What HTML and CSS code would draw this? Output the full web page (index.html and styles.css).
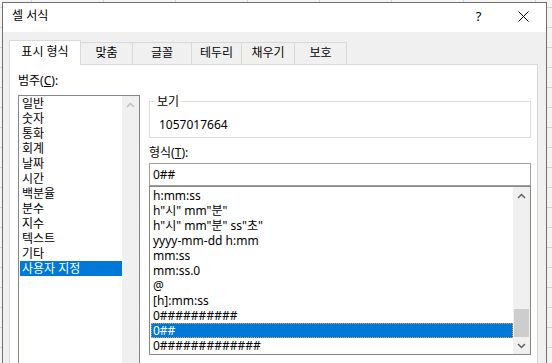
FILE: index.html
```html
<!DOCTYPE html>
<html lang="ko">
  <head>
    <meta charset="UTF-8" />
    <meta name="viewport" content="width=device-width, initial-scale=1.0" />
    <title>셀 서식</title>
    <link rel="stylesheet" href="styles.css">
  </head>
  <body>
    <div class="dialog">
      <div class="titlebar">
        <span class="title">셀 서식</span>
        <span class="title-btn help">?</span>
        <span class="title-btn close">
          <svg width="11" height="11" viewBox="0 0 11 11">
            <path d="M0.5 0.5 L10.5 10.5 M10.5 0.5 L0.5 10.5" stroke="#000" stroke-width="1" fill="none" />
          </svg>
        </span>
      </div>

      <div class="dialog-body">
        <div class="tabs">
          <div class="tab active" style="width: 72px">표시 형식</div>
          <div class="tab" style="width: 53px">맞춤</div>
          <div class="tab" style="width: 60px">글꼴</div>
          <div class="tab" style="width: 51px">테두리</div>
          <div class="tab" style="width: 54px">채우기</div>
          <div class="tab" style="width: 53px">보호</div>
        </div>

        <div class="panel">
          <div class="category">
            <div class="label">범주(<u>C</u>):</div>
            <div class="listbox cat-list">
              <ul>
                <li>일반</li>
                <li>숫자</li>
                <li>통화</li>
                <li>회계</li>
                <li>날짜</li>
                <li>시간</li>
                <li>백분율</li>
                <li>분수</li>
                <li>지수</li>
                <li>텍스트</li>
                <li>기타</li>
                <li class="selected">사용자 지정</li>
              </ul>
              <div class="vscroll">
                <div class="arrow disabled">
                  <svg width="9" height="6" viewBox="0 0 9 6"><polyline points="1,5 4.5,1.5 8,5" /></svg>
                </div>
              </div>
            </div>
          </div>

          <div class="format">
            <fieldset class="sample">
              <legend>보기</legend>
              <div class="sample-value">1057017664</div>
            </fieldset>

            <div class="label format-label">형식(<u>T</u>):</div>
            <div class="textbox">0##</div>

            <div class="listbox fmt-list">
              <ul>
                <li>h:mm:ss</li>
                <li>h"시" mm"분"</li>
                <li>h"시" mm"분" ss"초"</li>
                <li>yyyy-mm-dd h:mm</li>
                <li>mm:ss</li>
                <li>mm:ss.0</li>
                <li>@</li>
                <li>[h]:mm:ss</li>
                <li>0##########</li>
                <li class="selected focused">0##</li>
                <li>0#############</li>
              </ul>
              <div class="vscroll">
                <div class="arrow">
                  <svg width="9" height="6" viewBox="0 0 9 6"><polyline points="1,5 4.5,1.5 8,5" /></svg>
                </div>
                <div class="track"><div class="thumb"></div></div>
                <div class="arrow">
                  <svg width="9" height="6" viewBox="0 0 9 6"><polyline points="1,1 4.5,4.5 8,1" /></svg>
                </div>
              </div>
            </div>
          </div>
        </div>
      </div>
    </div>
  </body>
</html>
```

FILE: styles.css
```css
html,
body {
  margin: 0;
  height: 363px;
  overflow: hidden;
}

body {
  font-family: "Noto Sans", "Noto Sans CJK KR", sans-serif;
  font-size: 12px;
  color: #000000;
  background-color: #f4f4f4;
  background-image:
    linear-gradient(to bottom, #d4d4d4 1px, transparent 1px),
    linear-gradient(to right, #d4d4d4 1px, transparent 1px);
  background-size: 72px 20px;
  background-position: 31px 7px;
}

.dialog {
  width: 545px;
  height: 420px;
  margin: 2px 0 0 2px;
  box-sizing: border-box;
  border: 1px solid #707070;
  background-color: #f0f0f0;
}

/* title bar */
.titlebar {
  display: flex;
  align-items: center;
  height: 29px;
  background-color: #ffffff;
}

.title {
  flex: 1;
  padding-left: 9px;
  line-height: 26px;
  align-self: flex-start;
}

.title-btn {
  width: 45px;
  height: 26px;
  display: flex;
  align-items: center;
  justify-content: center;
  align-self: flex-start;
}

.help {
  font-size: 13px;
}

.close svg {
  display: block;
}

/* tabs */
.dialog-body {
  padding-top: 8px;
}

.tabs {
  display: flex;
  align-items: flex-end;
  height: 24px;
  padding-left: 6px;
}

.tab {
  box-sizing: border-box;
  height: 22px;
  line-height: 20px;
  text-align: center;
  border: 1px solid #d9d9d9;
  border-bottom: none;
  background-color: #f0f0f0;
  margin-left: -1px;
  white-space: nowrap;
}

.tab:first-child {
  margin-left: 0;
}

.tab.active {
  position: relative;
  z-index: 1;
  height: 25px;
  line-height: 22px;
  margin-bottom: -1px;
  background-color: #ffffff;
}

/* panel */
.panel {
  display: flex;
  gap: 9px;
  width: 529px;
  height: 320px;
  margin-left: 6px;
  box-sizing: border-box;
  border: 1px solid #d9d9d9;
  background-color: #ffffff;
  padding: 8px 0 0 8px;
}

.label {
  line-height: 15px;
}

.category {
  width: 122px;
}

.category .label {
  margin-bottom: 7px;
}

.listbox {
  display: flex;
  box-sizing: border-box;
  border: 1px solid #828790;
  background-color: #ffffff;
}

.listbox ul {
  flex: 1;
  list-style: none;
  margin: 0;
  padding: 0 0 0 1px;
}

.listbox li {
  height: 15px;
  line-height: 15px;
  padding-left: 2px;
  white-space: nowrap;
}

.listbox li.selected {
  background-color: #0078d7;
  color: #ffffff;
}

.listbox li.focused {
  outline: 1px dotted #f0a040;
  outline-offset: -1px;
}

.cat-list {
  height: 270px;
}

.vscroll {
  width: 17px;
  display: flex;
  flex-direction: column;
  background-color: #f0f0f0;
}

.arrow {
  height: 17px;
  display: flex;
  align-items: center;
  justify-content: center;
}

.arrow svg {
  display: block;
  fill: none;
  stroke: #606060;
  stroke-width: 1.5;
}

.arrow.disabled svg {
  stroke: #c0c0c0;
}

.track {
  flex: 1;
  display: flex;
  flex-direction: column;
  justify-content: flex-end;
}

.thumb {
  height: 28px;
  margin: 0 1px;
  background-color: #cdcdcd;
}

/* format side */
.format {
  width: 382px;
  margin-top: 21px;
}

.sample {
  margin: 0;
  padding: 0 0 5px 5px;
  border: 1px solid #dcdcdc;
}

.sample legend {
  padding: 0 2px;
  line-height: 15px;
}

.sample-value {
  padding: 8px 0 0 4px;
  line-height: 15px;
}

.format-label {
  margin-top: 7px;
}

.textbox {
  box-sizing: border-box;
  height: 23px;
  margin-top: 3px;
  padding-left: 3px;
  line-height: 21px;
  border: 1px solid #a0a0a0;
  background-color: #ffffff;
}

.fmt-list {
  height: 169px;
}

.fmt-list ul {
  padding-top: 1px;
  padding-bottom: 1px;
}
```
